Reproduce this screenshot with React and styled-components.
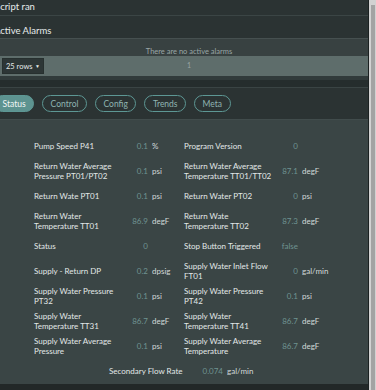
import React from 'react';
import styled, { createGlobalStyle } from 'styled-components';

const GlobalStyle = createGlobalStyle`
  html, body {
    margin: 0;
    padding: 0;
    background: #2b3333;
    font-family: Lato, "Open Sans", sans-serif;
    overflow: hidden;
  }
`;

// Layout shell
const Page = styled.div`
  display: flex;
  width: 376px;
  height: 390px;
  overflow: hidden;
`;

const Main = styled.div`
  flex: 1;
  overflow: hidden;
  border-right: 1px solid #1b2121;
  display: flex;
  flex-direction: column;
`;

const Shifted = styled.div`
  width: calc(100% + 20px);
  margin-left: -10px;
  flex: 1;
  display: flex;
  flex-direction: column;
`;

const ScrollTrack = styled.div`
  width: 7px;
  background: #d2d2d2;
  display: flex;
  justify-content: center;
  padding-top: 5px;
`;

const ScrollThumb = styled.div`
  width: 4px;
  background: #a3a3a3;
`;

// Top area
const TitleRow = styled.div`
  height: 16px;
  padding-left: 5px;
  border-bottom: 1px solid #3b4545;
  color: #e6ecec;
  font-size: 9.5px;
  line-height: 13px;
  box-sizing: border-box;
  white-space: nowrap;
`;

const SectionHeader = styled.div`
  height: 22px;
  padding: 9px 0 0 4px;
  color: #e6ecec;
  font-size: 9.5px;
  line-height: 12px;
  box-sizing: border-box;
  white-space: nowrap;
`;

const AlarmPanel = styled.div`
  border-top: 1px solid #465050;
`;

const AlarmMessage = styled.div`
  height: 17px;
  background: #384141;
  color: #9aa6a6;
  font-size: 7.5px;
  line-height: 9px;
  padding: 8px 0 0 10px;
  box-sizing: border-box;
  text-align: center;
`;

const PagerBand = styled.div`
  height: 20px;
  background: #5e6d6b;
  display: flex;
  align-items: center;
  padding-left: 12px;
  position: relative;
`;

const RowsSelect = styled.div`
  width: 42px;
  height: 16px;
  background: #2d3636;
  border: 1px solid #27302f;
  box-sizing: border-box;
  color: #e4e9e9;
  font-size: 7.5px;
  white-space: nowrap;
  display: flex;
  align-items: center;
  justify-content: space-between;
  padding: 0 3px 0 3px;
`;

const Caret = styled.span`
  font-size: 5px;
  color: #e4e9e9;
`;

const PageNumber = styled.span`
  position: absolute;
  left: 197px;
  top: 5px;
  font-size: 7px;
  color: #9aa5a5;
`;

const PagerShadow = styled.div`
  height: 4px;
  background: #313b3b;
`;

const Gap = styled.div`
  height: 7px;
  background: #252d2d;
  border-bottom: 1px solid #3a4444;
`;

// Tabs
const TabBar = styled.div`
  display: flex;
  gap: 8px;
  padding: 7px 0 7px 4px;
  border-bottom: 1px solid #414c4c;
`;

const Tab = styled.div`
  height: 17px;
  box-sizing: border-box;
  padding: 0 7.5px;
  border-radius: 9px;
  border: 1px solid #5d9794;
  background: ${p => (p.$active ? '#5d9390' : 'transparent')};
  color: ${p => (p.$active ? '#f2f6f6' : '#8fb3b1')};
  font-size: 8.5px;
  display: flex;
  align-items: center;
`;

// Values panel
const ValuePanel = styled.div`
  flex: 1;
  background: #3a4545;
  padding-top: 13px;
`;

const Grid = styled.div`
  width: 300px;
  margin: 0 auto;
  display: flex;
  flex-wrap: wrap;
  justify-content: center;
`;

const Item = styled.div`
  width: 150px;
  height: 25px;
  display: flex;
  align-items: center;
  font-size: 8px;
  line-height: 10px;
`;

const Label = styled.div`
  width: 90px;
  color: #e2e8e8;
`;

const Value = styled.div`
  width: 24px;
  text-align: right;
  color: #6f9391;
`;

const Unit = styled.div`
  margin-left: 4px;
  color: #d2d9d9;
`;

const Footer = styled.div`
  height: 6px;
  background: #222828;
`;

const readings = [
  ['Pump Speed P41', '0.1', '%'],
  ['Program Version', '0', ''],
  ['Return Water Average Pressure PT01/PT02', '0.1', 'psi'],
  ['Return Water Average Temperature TT01/TT02', '87.1', 'degF'],
  ['Return Wate PT01', '0.1', 'psi'],
  ['Return Water PT02', '0', 'psi'],
  ['Return Water Temperature TT01', '86.9', 'degF'],
  ['Return Wate Temperature TT02', '87.3', 'degF'],
  ['Status', '0', ''],
  ['Stop Button Triggered', 'false', ''],
  ['Supply - Return DP', '0.2', 'dpsig'],
  ['Supply Water Inlet Flow FT01', '0', 'gal/min'],
  ['Supply Water Pressure PT32', '0.1', 'psi'],
  ['Supply Water Pressure PT42', '0.1', 'psi'],
  ['Supply Water Temperature TT31', '86.7', 'degF'],
  ['Supply Water Temperature TT41', '86.7', 'degF'],
  ['Supply Water Average Pressure', '0.1', 'psi'],
  ['Supply Water Average Temperature', '86.7', 'degF'],
  ['Secondary Flow Rate', '0.074', 'gal/min'],
];

const tabs = ['Status', 'Control', 'Config', 'Trends', 'Meta'];

const App = () => (
  <>
    <GlobalStyle />
    <Page>
      <Main>
        <Shifted>
          <TitleRow>Script ran</TitleRow>
          <SectionHeader>Active Alarms</SectionHeader>
          <AlarmPanel>
            <AlarmMessage>There are no active alarms</AlarmMessage>
            <PagerBand>
              <RowsSelect>
                <span>25 rows</span>
                <Caret>▼</Caret>
              </RowsSelect>
              <PageNumber>1</PageNumber>
            </PagerBand>
            <PagerShadow />
          </AlarmPanel>
          <Gap />
          <TabBar>
            {tabs.map(t => (
              <Tab key={t} $active={t === 'Status'}>{t}</Tab>
            ))}
          </TabBar>
          <ValuePanel>
            <Grid>
              {readings.map(([label, value, unit]) => (
                <Item key={label}>
                  <Label>{label}</Label>
                  <Value>{value}</Value>
                  <Unit>{unit}</Unit>
                </Item>
              ))}
            </Grid>
          </ValuePanel>
          <Footer />
        </Shifted>
      </Main>
      <ScrollTrack>
        <ScrollThumb />
      </ScrollTrack>
    </Page>
  </>
);

export default App;
